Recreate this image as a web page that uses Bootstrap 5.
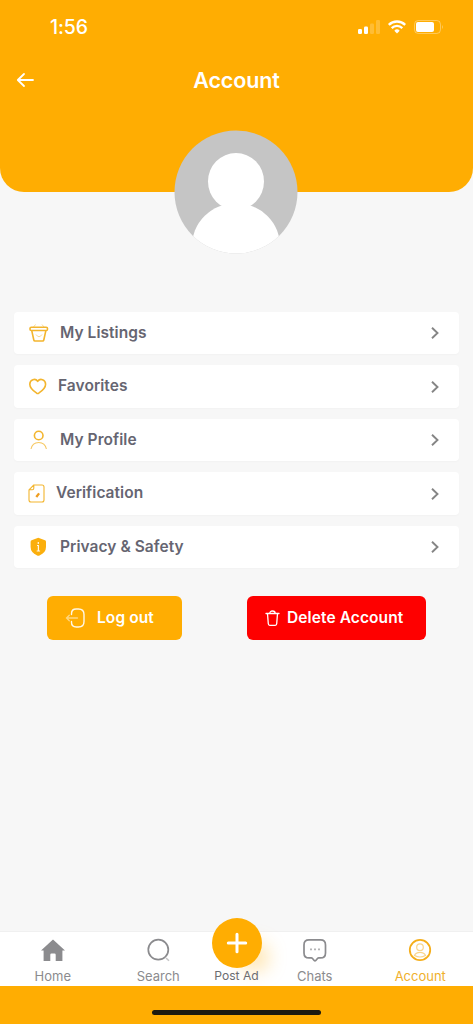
<!DOCTYPE html>
<html lang="en">
<head>
<meta charset="utf-8">
<meta name="viewport" content="width=device-width, initial-scale=1">
<title>Account</title>
<link rel="stylesheet" href="https://cdn.jsdelivr.net/npm/bootstrap@5.3.0/dist/css/bootstrap.min.css">
<style>
:root { --brand: #ffad02; --ink: #666571; --muted: #8b8b8e; }
body { font-family: Inter, "Liberation Sans", sans-serif; background: #f7f7f7; line-height: 1.2; }
svg { display: block; flex: none; overflow: visible; }
.screen { height: 1024px; }
.hero { height: 192px; background: var(--brand); border-radius: 0 0 24px 24px; }
.status { height: 54px; padding: 0 30px 0 50px; }
.clock { font-size: 19.5px; font-weight: 500; letter-spacing: -.1px; padding-top: 1px; }
.titlebar { height: 52px; padding: 0 16px; }
.titlebar h1 { font-size: 21.5px; font-weight: 600; letter-spacing: -.15px; padding-top: 1px; }
.side { width: 18px; }
.avatar { margin-top: -62px; padding-right: 1px; }
.menu { margin: 58px 14.5px 0 14px; gap: 11.2px; }
.menu-row { height: 42.3px; padding: 0 20px 0 14px; border-radius: 4px; box-shadow: 0 1px 2px rgba(0,0,0,.025); color: var(--ink); font-size: 15.5px; font-weight: 600; letter-spacing: .05px; }
.menu-label { margin-left: 10px; }
.actions { margin: 27.5px 47px 0; }
.action { height: 44px; border-radius: 6px; font-size: 15.5px; font-weight: 600; padding: 0; border: 0; color: #fff; letter-spacing: .1px; }
.action:hover { color: #fff; }
.logout { width: 135px; background: var(--brand); padding-left: 18px; gap: 11px; }
.delete { width: 179px; background: #fe0000; padding-left: 18px; gap: 7px; }
.tabs { height: 55px; background: #fff; border-top: 1px solid #f0f0f0; }
.tab { flex: 1 1 0; padding-top: 6px; color: var(--muted); font-size: 13px; letter-spacing: 0; text-decoration: none; gap: 6px; }
.tab.current { color: #f0b02c; }
.post { width: 51px; margin-top: -14px; font-size: 12.1px; color: #6c6c70; text-decoration: none; gap: 1px; white-space: nowrap; }
.plus { width: 50px; height: 50px; background: var(--brand); box-shadow: 17px 14px 20px -12px rgba(255,173,2,.4); }
.homebar { height: 38px; background: var(--brand); padding-top: 23.5px; }
.homebar span { width: 169px; height: 5px; border-radius: 3px; background: #1c1a10; }
</style>
</head>
<body>
<div class="screen d-flex flex-column overflow-hidden">
  <header class="hero text-white">
    <div class="status d-flex align-items-center justify-content-between">
      <span class="clock">1:56</span>
      <div class="d-flex align-items-center">
        <svg width="22" height="14" viewBox="0 0 22 14" fill="#fff"><rect x="0" y="9" width="4" height="5" rx="1.2"/><rect x="6" y="6.500" width="4" height="7.500" rx="1.2"/><g opacity=".2"><rect x="12" y="3.500" width="4" height="10.500" rx="1.2"/><rect x="18" y="0" width="4" height="14" rx="1.2"/></g></svg>
        <svg class="ms-2" width="18" height="14" viewBox="0 0 18 14" fill="none" stroke="#fff" stroke-width="2.300"><path d="M.8 4.900a11.600 11.600 0 0 1 16.400 0M3.700 8.100a7.500 7.500 0 0 1 10.600 0"/><path d="M9 13.500 6.300 10.700a3.800 3.800 0 0 1 5.400 0Z" fill="#fff" stroke="none"/></svg>
        <svg class="ms-2" width="29" height="14" viewBox="0 0 29 14"><rect x=".5" y=".5" width="26" height="13" rx="3.800" fill="none" stroke="#fff" opacity=".35"/><rect x="2" y="2" width="18" height="10" rx="2" fill="#fff"/><path d="M28 4.800q1.500 2.200 0 4.400z" fill="#fff" opacity=".5"/></svg>
      </div>
    </div>
    <div class="titlebar d-flex align-items-center justify-content-between">
      <svg class="side" width="18" height="14" viewBox="0 0 18 14" fill="none" stroke="#fff" stroke-width="1.800" stroke-linecap="round" stroke-linejoin="round"><path d="M17 7H2M8 1 1.800 7 8 13"/></svg>
      <h1 class="m-0">Account</h1>
      <span class="side"></span>
    </div>
  </header>

  <div class="avatar d-flex justify-content-center">
    <svg width="124" height="124" viewBox="0 0 124 124"><defs><clipPath id="disc"><circle cx="62" cy="62" r="61.500"/></clipPath></defs><g clip-path="url(#disc)"><rect width="124" height="124" fill="#c5c5c5"/><ellipse cx="62" cy="51.500" rx="28" ry="28.500" fill="#fff"/><circle cx="62" cy="117.500" r="44.500" fill="#fff"/></g></svg>
  </div>

  <nav class="menu d-flex flex-column">
    <a class="menu-row bg-white d-flex align-items-center text-decoration-none" href="#">
      <svg width="22" height="20" viewBox="0 0 22 20" fill="none" stroke="#f3b52e" stroke-width="1.600" stroke-linejoin="round"><rect x="2" y="4.300" width="17.500" height="3.200" rx="1.300"/><path d="m3.800 7.800 2 9.200q.2 1 1.200 1h7.600q1 0 1.200-1l2-9.200"/><path d="M7.500 1.500 5.500 4M14 1.500 16 4M8 11.500q3 4.500 6 0" stroke-width="1" opacity=".5"/></svg>
      <span class="menu-label flex-grow-1">My Listings</span>
      <svg width="8" height="12" viewBox="0 0 8 12" fill="none" stroke="#858585" stroke-width="1.900"><path d="m1 .8 5.500 5.200L1 11.200"/></svg>
    </a>
    <a class="menu-row bg-white d-flex align-items-center text-decoration-none" href="#">
      <svg width="20" height="18" viewBox="0 0 20 18" fill="none" stroke="#f3b52e" stroke-width="1.600" stroke-linejoin="round"><path d="M9.700 3.300C7.500 0 1.800 1.300 1.800 6.300c0 4.400 4.600 7.400 6.900 8.900q1 .6 2 0c2.300-1.500 6.900-4.500 6.900-8.900 0-5-5.700-6.300-7.900-3Z"/></svg>
      <span class="menu-label flex-grow-1">Favorites</span>
      <svg width="8" height="12" viewBox="0 0 8 12" fill="none" stroke="#858585" stroke-width="1.900"><path d="m1 .8 5.500 5.200L1 11.200"/></svg>
    </a>
    <a class="menu-row bg-white d-flex align-items-center text-decoration-none" href="#">
      <svg width="22" height="20" viewBox="0 0 22 20" fill="none" stroke="#f3b52e"><circle cx="10.700" cy="5.500" r="4.300" stroke-width="1.600"/><path d="M3 19q1.400-6.500 7.700-6.500T18.400 19" stroke-width="1.100" opacity=".75"/></svg>
      <span class="menu-label flex-grow-1">My Profile</span>
      <svg width="8" height="12" viewBox="0 0 8 12" fill="none" stroke="#858585" stroke-width="1.900"><path d="m1 .8 5.500 5.200L1 11.200"/></svg>
    </a>
    <a class="menu-row bg-white d-flex align-items-center text-decoration-none" href="#">
      <svg width="18" height="20" viewBox="0 0 18 20" fill="none" stroke="#f3b52e" stroke-width="1.100"><path d="M5.800 1H14q2 0 2 2v13q0 2-2 2H3q-2 0-2-2V5.800ZM5.800 1v3.300q0 1.500-1.500 1.500H1" stroke-linejoin="round"/><path d="m8.300 13 2.800-3.600" stroke="#ef9d20" stroke-width="2.300"/></svg>
      <span class="menu-label flex-grow-1">Verification</span>
      <svg width="8" height="12" viewBox="0 0 8 12" fill="none" stroke="#858585" stroke-width="1.900"><path d="m1 .8 5.500 5.200L1 11.200"/></svg>
    </a>
    <a class="menu-row bg-white d-flex align-items-center text-decoration-none" href="#">
      <svg width="22" height="20" viewBox="0 0 22 20"><path d="M10.300.8 17 3.200q1 .4 1 1.500V10q0 5.500-6.500 8.500-1.200.5-2.400 0Q2.600 15.500 2.600 10V4.700q0-1.100 1-1.500Z" fill="#fbaf0d"/><path d="M10.400 8.500v5.500M9 8.500h1.900M8.700 14h3.400M10.300 5v2" fill="none" stroke="#fff" stroke-width="1.200" opacity=".9"/></svg>
      <span class="menu-label flex-grow-1">Privacy &amp; Safety</span>
      <svg width="8" height="12" viewBox="0 0 8 12" fill="none" stroke="#858585" stroke-width="1.900"><path d="m1 .8 5.500 5.200L1 11.200"/></svg>
    </a>
  </nav>

  <div class="actions d-flex justify-content-between">
    <button class="btn action logout d-flex align-items-center" type="button">
      <svg width="21" height="20" viewBox="0 0 21 20" fill="none" stroke="#fff" stroke-linecap="round"><path d="M6.500 6.500v-.8Q6.500 1 11.200 1h2.300Q19 1 19 6.500v7q0 5.500-5.500 5.500h-2.300q-4.700 0-4.700-4.700v-.8" stroke-width="1.400" opacity=".9"/><path d="M12.500 10H1.500M4.300 7.300 1.500 10l2.800 2.700" stroke-width="1.300" opacity=".5"/></svg>
      <span>Log out</span>
    </button>
    <button class="btn action delete d-flex align-items-center" type="button">
      <svg width="15" height="16" viewBox="0 0 15 16" fill="none" stroke="#fff" stroke-width="1.300" stroke-linejoin="round" stroke-linecap="round"><path d="M1 3.500h13M4.800 3.500Q4.800 1 7.500 1t2.700 2.500M2.500 3.800l.8 10q.1 1.500 1.500 1.500h5.400q1.400 0 1.500-1.500l.8-10"/></svg>
      <span>Delete Account</span>
    </button>
  </div>

  <footer class="mt-auto">
    <nav class="tabs d-flex">
      <a class="tab d-flex flex-column align-items-center" href="#">
        <svg width="26" height="25" viewBox="0 0 26 25" fill="var(--muted)"><path d="m13 1.500 12 11h-2.600V23h-6.700v-6.300q0-1.200-1.200-1.200h-3q-1.200 0-1.200 1.200V23H3.600V12.500H1Z"/></svg>
        <span>Home</span>
      </a>
      <a class="tab d-flex flex-column align-items-center" href="#">
        <svg width="26" height="25" viewBox="0 0 26 25" fill="none" stroke="var(--muted)"><circle cx="13.300" cy="11.700" r="10" stroke-width="1.700"/><path d="m21 20 3 2.800" stroke-width="1.500" opacity=".5"/></svg>
        <span>Search</span>
      </a>
      <a class="post d-flex flex-column align-items-center" href="#">
        <span class="plus rounded-circle d-flex align-items-center justify-content-center"><svg width="20" height="20" viewBox="0 0 20 20" stroke="#fff" stroke-width="3" stroke-linecap="round"><path d="M10 1.300v17.400M1.300 10h17.400"/></svg></span>
        <span>Post Ad</span>
      </a>
      <a class="tab d-flex flex-column align-items-center" href="#">
        <svg width="26" height="25" viewBox="0 0 26 25" fill="none" stroke="var(--muted)" stroke-width="1.700" stroke-linejoin="round"><path d="M7 1.900h11.500q5 0 5 5v8q0 5-5 5h-1.700q-.8 0-1.300.6l-1.700 2q-.8.900-1.600 0l-1.700-2q-.5-.6-1.300-.6H7q-5 0-5-5v-8q0-5 5-5Z"/><path d="M8 11.300h2M12 11.300h2M16 11.300h2" opacity=".65"/></svg>
        <span>Chats</span>
      </a>
      <a class="tab current d-flex flex-column align-items-center" href="#">
        <svg width="26" height="25" viewBox="0 0 26 25" fill="none" stroke="#f5ae1a"><circle cx="13" cy="12" r="10.200" stroke-width="1.800"/><g stroke-width="1.200" opacity=".5"><circle cx="13" cy="9.200" r="3.300"/><path d="M7.500 17.500q1.200-3.200 5.500-3.200t5.500 3.200q-5.500 3-11 0Z"/></g></svg>
        <span>Account</span>
      </a>
    </nav>
    <div class="homebar d-flex justify-content-center"><span></span></div>
  </footer>
</div>
<script src="https://cdn.jsdelivr.net/npm/bootstrap@5.3.0/dist/js/bootstrap.bundle.min.js"></script>
</body>
</html>
